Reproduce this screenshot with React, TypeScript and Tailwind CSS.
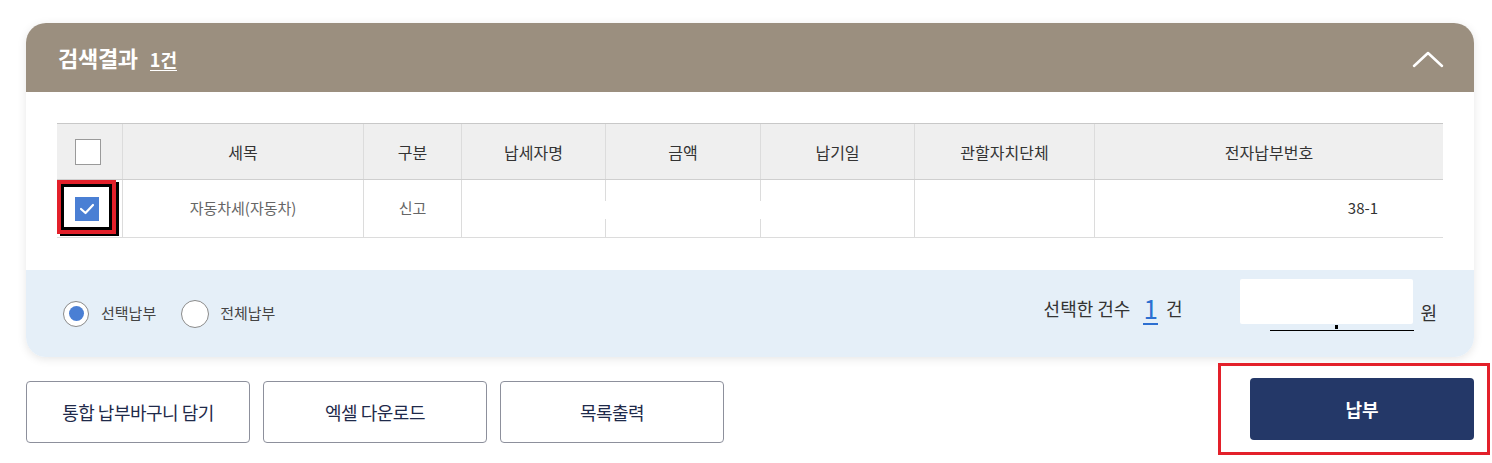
import React from "react";

const font = { fontFamily: '"Noto Sans CJK KR", "Noto Sans", sans-serif' };

const cols = [
  { w: "w-[65px]", label: "" },
  { w: "w-[241px]", label: "세목" },
  { w: "w-[98px]", label: "구분" },
  { w: "w-[144px]", label: "납세자명" },
  { w: "w-[155px]", label: "금액" },
  { w: "w-[154px]", label: "납기일" },
  { w: "w-[180px]", label: "관할자치단체" },
  { w: "flex-1", label: "전자납부번호" },
];

export default function App() {
  return (
    <div className="w-[1492px] h-[463px] bg-white overflow-hidden" style={font}>
      <div className="pt-[23px] pl-[26px] pr-[18px]">
        <div className="w-[1448px] rounded-[20px] bg-white shadow-[0_2px_10px_rgba(0,0,0,0.10)] overflow-hidden">
          {/* header */}
          <div className="h-[69px] bg-[#9b8f7f] flex items-center justify-between pl-[32px] pr-[30px]">
            <div className="flex items-baseline gap-[12px] text-white">
              <span className="text-[22px] font-bold tracking-[-0.3px]">검색결과</span>
              <span className="text-[18px] font-bold border-b border-white leading-[22px]">1건</span>
            </div>
            <svg width="32" height="18" viewBox="0 0 32 18" className="mt-[2px]">
              <path d="M2 16 L16 3 L30 16" fill="none" stroke="white" strokeWidth="2.5" strokeLinecap="round" strokeLinejoin="round" />
            </svg>
          </div>
          {/* body */}
          <div className="px-[31px] pt-[31px] pb-[32px]">
            <div className="border-t border-[#c8c8c8] relative">
              {/* header row */}
              <div className="flex h-[56px] bg-[#efefef] border-b border-[#cfcfcf]">
                {cols.map((c, i) => (
                  <div
                    key={i}
                    className={`${c.w} flex items-center justify-center text-[16px] text-[#333] ${i > 0 ? "border-l border-[#dcdcdc]" : ""}`}
                  >
                    {i === 0 ? (
                      <div className="w-[26px] h-[26px] -ml-[3px] bg-white border border-[#9a9a9a]" />
                    ) : (
                      c.label
                    )}
                  </div>
                ))}
              </div>
              {/* data row */}
              <div className="flex h-[58px] border-b border-[#dcdcdc]">
                <div className="w-[65px] flex items-center">
                  <div className="w-[59px] h-[54px] -mt-[3px] border-[4px] border-[#e3202a] flex shadow-[3px_2px_0_#000]">
                    <div className="flex-1 border-[3px] border-black flex items-center justify-center">
                      <div className="w-[24px] h-[24px] mt-[3px] bg-[#4a7fd4] flex items-center justify-center">
                        <svg width="16" height="12" viewBox="0 0 16 12">
                          <path d="M2 6 L6.5 10 L14 2" fill="none" stroke="white" strokeWidth="2.2" strokeLinecap="round" strokeLinejoin="round" />
                        </svg>
                      </div>
                    </div>
                  </div>
                </div>
                <div className="w-[241px] border-l border-[#dcdcdc] flex items-center justify-center text-[15px] text-[#666]">
                  자동차세(자동차)
                </div>
                <div className="w-[98px] border-l border-[#dcdcdc] flex items-center justify-center text-[15px] text-[#666]">
                  신고
                </div>
                <div className="w-[144px] border-l border-[#dcdcdc]" />
                <div className="w-[155px] border-l border-[#dcdcdc]" />
                <div className="w-[154px] border-l border-[#dcdcdc]" />
                <div className="w-[180px] border-l border-[#dcdcdc]" />
                <div className="flex-1 border-l border-[#dcdcdc] flex items-center justify-end pr-[65px] text-[15px] text-[#333]">
                  38-1
                </div>
              </div>
              {/* redaction overlay */}
              <div className="absolute left-[547px] top-[77px] w-[310px] h-[18px] bg-white" />
            </div>
          </div>
          {/* footer */}
          <div className="h-[87px] bg-[#e5eff8] flex items-center justify-between pl-[37px] pr-[37px]">
            <div className="flex items-center text-[15px] text-[#444]">
              <div className="w-[26px] h-[26px] rounded-full border border-[#8a8a8a] bg-white flex items-center justify-center">
                <div className="w-[15px] h-[15px] rounded-full bg-[#4a7fd4]" />
              </div>
              <span className="ml-[12px]">선택납부</span>
              <div className="ml-[25px] w-[28px] h-[28px] rounded-full border border-[#8a8a8a] bg-white" />
              <span className="ml-[11px]">전체납부</span>
            </div>
            <div className="-mt-[10px] flex items-center text-[18px] text-[#333]">
              <span>선택한 건수</span>
              <span className="ml-[13px] text-[26px] leading-[30px] text-[#2c6fd1] border-b-2 border-[#2c6fd1]">1</span>
              <span className="ml-[8px]">건</span>
              <div className="relative ml-[58px] w-[174px] h-[58px]">
                <div className="absolute left-0 top-[-1px] w-[173px] h-[45px] bg-white rounded-[2px]" />
                <div className="absolute left-[30px] top-[50px] w-[144px] border-b border-black" />
                <div className="absolute left-[95px] top-[45px] w-[3px] h-[4px] bg-black" />
              </div>
              <span className="ml-[6px] mt-[8px]">원</span>
            </div>
          </div>
        </div>
      </div>
      {/* buttons */}
      <div className="mt-[24px] pl-[26px] pr-[18px] flex items-start">
        <div className="flex gap-[13px]">
          {["통합 납부바구니 담기", "엑셀 다운로드", "목록출력"].map((t) => (
            <div
              key={t}
              className="w-[224px] h-[62px] border border-[#8d909c] rounded-[4px] bg-white flex items-center justify-center text-[18px] text-[#1f2a4a] tracking-[-0.5px]"
            >
              {t}
            </div>
          ))}
        </div>
        <div className="ml-auto -mt-[18px] -mr-[16px] w-[272px] h-[92px] border-[3px] border-[#e3202a] flex items-center pl-[29px]">
          <div className="w-[224px] h-[62px] rounded-[4px] bg-[#243868] flex items-center justify-center text-[18px] font-bold text-white">
            납부
          </div>
        </div>
      </div>
    </div>
  );
}
